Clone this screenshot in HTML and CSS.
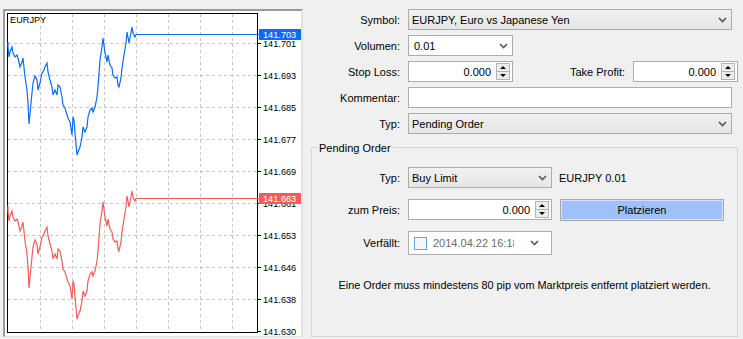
FILE: index.html
```html
<!DOCTYPE html>
<html>
<head>
<meta charset="utf-8">
<link rel="stylesheet" href="styles.css">
</head>
<body>
<div class="app">
  <div class="chart">
    <svg width="296" height="325" viewBox="5 11 296 325" xmlns="http://www.w3.org/2000/svg">
      <defs>
        <polyline id="curve" fill="none" points="8,42 8,47 9,57 10,52 12,47 13,53 15,57 17,55 18,58 20,67 22,62 23,58 25,77 27,90 28,103 29,124 31,103 32,93 33,83 35,76 37,80 38,90 40,83 42,73 43,72 45,67 47,63 48,72 50,80 52,87 53,95 55,90 57,95 58,85 60,87 62,97 63,105 65,108 67,115 68,118 70,122 72,135 73,117 74,120 75,133 77,155 78,152 80,147 82,137 83,127 85,132 87,127 88,117 90,110 92,108 93,112 95,107 97,97 98,87 100,60 102,47 103,38 105,53 107,62 108,55 110,65 112,68 113,75 115,78 117,77 118,85 119,87 121,78 122,68 124,55 126,43 127,32 128,37 129,43 131,33 132,27 133,33 135,37 136,34.5"/>
      </defs>
      <g class="grid">
        <path d="M40.5 14V332M72.5 14V332M104.5 14V332M136.5 14V332M168.5 14V332M200.5 14V332M232.5 14V332"/>
        <path d="M8 43.5H257M8 75.5H257M8 107.5H257M8 139.5H257M8 171.5H257M8 203.5H257M8 235.5H257M8 267.5H257M8 299.5H257"/>
      </g>
      <rect x="7.5" y="13.5" width="250" height="319" fill="none" stroke="#000"/>
      <path class="ticks" d="M258 43.5h3M258 75.5h3M258 107.5h3M258 139.5h3M258 171.5h3M258 203.5h3M258 235.5h3M258 267.5h3M258 299.5h3M258 331.5h3"/>
      <g class="axis">
        <text x="263" y="47">141.701</text>
        <text x="263" y="79">141.693</text>
        <text x="263" y="111">141.685</text>
        <text x="263" y="143">141.677</text>
        <text x="263" y="175">141.669</text>
        <text x="263" y="207">141.661</text>
        <text x="263" y="239">141.653</text>
        <text x="263" y="271">141.646</text>
        <text x="263" y="303">141.638</text>
        <text x="263" y="335">141.630</text>
      </g>
      <text class="sym" x="10" y="23">EURJPY</text>
      <use href="#curve" class="blue"/>
      <line x1="136" y1="34.5" x2="259" y2="34.5" class="blue"/>
      <rect x="259" y="29" width="42" height="11" class="bluebg"/>
      <text x="263" y="38" class="tag">141.703</text>
      <use href="#curve" class="red" transform="translate(0,164)"/>
      <line x1="136" y1="198.5" x2="259" y2="198.5" class="red"/>
      <rect x="259" y="193" width="42" height="11" class="redbg"/>
      <text x="263" y="202" class="tag">141.663</text>
    </svg>
  </div>
  <div class="panel">
    <div class="rows">
      <div class="row">
        <span class="lbl">Symbol:</span>
        <div class="ctl combo w-full"><span class="val">EURJPY, Euro vs Japanese Yen</span><svg class="chev" width="9" height="6" viewBox="0 0 9 6"><path d="M1 1l3.5 3.5L8 1"/></svg></div>
      </div>
      <div class="row">
        <span class="lbl">Volumen:</span>
        <div class="ctl edit w-sm"><span class="val pad5">0.01</span><svg class="chev" width="9" height="6" viewBox="0 0 9 6"><path d="M1 1l3.5 3.5L8 1"/></svg></div>
      </div>
      <div class="row">
        <span class="lbl">Stop Loss:</span>
        <div class="ctl edit num w-sm"><span class="val">0.000</span><span class="spin"><span class="up"></span><span class="dn"></span></span></div>
        <span class="lbl2">Take Profit:</span>
        <div class="ctl edit num w-sm"><span class="val">0.000</span><span class="spin"><span class="up"></span><span class="dn"></span></span></div>
      </div>
      <div class="row">
        <span class="lbl">Kommentar:</span>
        <div class="ctl edit w-full"></div>
      </div>
      <div class="row">
        <span class="lbl">Typ:</span>
        <div class="ctl combo w-full"><span class="val">Pending Order</span><svg class="chev" width="9" height="6" viewBox="0 0 9 6"><path d="M1 1l3.5 3.5L8 1"/></svg></div>
      </div>
    </div>
    <fieldset class="group">
      <legend>Pending Order</legend>
      <div class="grows">
        <div class="row">
          <span class="glbl">Typ:</span>
          <div class="ctl combo w-md"><span class="val">Buy Limit</span><svg class="chev" width="9" height="6" viewBox="0 0 9 6"><path d="M1 1l3.5 3.5L8 1"/></svg></div>
          <span class="info">EURJPY 0.01</span>
        </div>
        <div class="row">
          <span class="glbl">zum Preis:</span>
          <div class="ctl edit num w-md"><span class="val">0.000</span><span class="spin"><span class="up"></span><span class="dn"></span></span></div>
          <div class="btn">Platzieren</div>
        </div>
        <div class="row tall">
          <span class="glbl">Verfällt:</span>
          <div class="ctl edit date w-md"><span class="chk"></span><span class="dval">2014.04.22 16:18</span><svg class="chev" width="9" height="6" viewBox="0 0 9 6"><path d="M1 1l3.5 3.5L8 1"/></svg></div>
        </div>
      </div>
      <p class="msg">Eine Order muss mindestens 80 pip vom Marktpreis entfernt platziert werden.</p>
    </fieldset>
  </div>
</div>
</body>
</html>
```
FILE: styles.css
```css
html, body {
  margin: 0;
  background: #f0f0f0;
  font-family: "Liberation Sans", Arial, sans-serif;
  font-size: 11px;
  color: #000;
}

.app {
  display: flex;
  align-items: flex-start;
  padding: 9px 0 0 3px;
  height: 339px;
  box-sizing: border-box;
}

.chart {
  width: 300px;
  height: 328px;
  box-sizing: border-box;
  border-style: solid;
  border-width: 2px 2px 1px 2px;
  border-color: #9b9b9b #e3e3e3 #e3e3e3 #9b9b9b;
  background: #fff;
}

.chart svg {
  display: block;
}

.grid path {
  stroke: #c6c6c6;
  stroke-width: 1;
  stroke-dasharray: 3 3;
  fill: none;
}

.ticks {
  stroke: #000;
  stroke-width: 1;
}

.axis text, .tag, .sym {
  font-family: "Liberation Sans", Arial, sans-serif;
  font-size: 9.2px;
  fill: #000;
}

.tag {
  fill: #fff;
}

.blue {
  stroke: #0a6cf4;
  stroke-width: 1.2;
  fill: none;
}

.red {
  stroke: #f65b5b;
  stroke-width: 1.2;
  fill: none;
}

.bluebg {
  fill: #0a6cf4;
}

.redbg {
  fill: #f65b5b;
}

/* form panel */
.panel {
  margin-left: 8px;
  width: 427px;
  display: flex;
  flex-direction: column;
}

.rows {
  display: flex;
  flex-direction: column;
  gap: 5px;
}

.row {
  display: flex;
  align-items: center;
  height: 21px;
}

.row.tall {
  height: 24px;
}

.lbl {
  width: 89px;
  margin-right: 8px;
  text-align: right;
  white-space: nowrap;
}

.lbl2 {
  flex: 1;
  margin-right: 8px;
  text-align: right;
  white-space: nowrap;
}

.glbl {
  width: 88px;
  margin-right: 8px;
  text-align: right;
  white-space: nowrap;
}

.ctl {
  box-sizing: border-box;
  height: 21px;
  border: 1px solid #acacac;
  display: flex;
  align-items: center;
  padding: 0 3px;
  position: relative;
}

.combo {
  background: linear-gradient(#f1f1f1, #e6e6e6);
}

.edit {
  background: #fff;
}

.w-full { width: 324px; }
.w-sm { width: 105px; }
.w-md { width: 144px; }

.val {
  flex: 1;
  white-space: nowrap;
  overflow: hidden;
}

.pad5 {
  padding-left: 2px;
}

.num .val {
  text-align: right;
  padding-right: 5px;
}

.num {
  padding-right: 2px;
}

.chev {
  flex: none;
  margin-right: 1px;
}

.chev path {
  fill: none;
  stroke: #5a5a5a;
  stroke-width: 1.7;
}

.spin {
  flex: none;
  width: 14px;
  height: 17px;
  display: flex;
  flex-direction: column;
  box-sizing: border-box;
  border: 1px solid #b4b4b4;
  background: #ececec;
}

.spin .up, .spin .dn {
  flex: 1;
  display: flex;
  align-items: center;
  justify-content: center;
}

.spin .up {
  border-bottom: 1px solid #b4b4b4;
}

.spin .up::before {
  content: "";
  border-left: 3px solid transparent;
  border-right: 3px solid transparent;
  border-bottom: 3px solid #000;
}

.spin .dn::before {
  content: "";
  border-left: 3px solid transparent;
  border-right: 3px solid transparent;
  border-top: 3px solid #000;
}

.group {
  margin: 6px 0 0 0;
  padding: 0;
  border: 1px solid #d6d6d6;
  height: 197px;
  box-sizing: border-box;
  min-width: 0;
}

.group legend {
  margin-left: 5px;
  padding: 2px 2px 0;
  line-height: 13px;
}

.grows {
  display: flex;
  flex-direction: column;
  gap: 11px;
  padding-top: 12px;
}

.info {
  margin-left: 7px;
  white-space: nowrap;
}

.btn {
  margin-left: 8px;
  width: 164px;
  height: 22px;
  box-sizing: border-box;
  border: 1px solid #a8a8a8;
  box-shadow: inset 0 0 0 1px #cfe0fb;
  background: #9fc0f9;
  display: flex;
  align-items: center;
  justify-content: center;
}

.date {
  height: 24px;
  padding: 0 4px 0 5px;
}

.chk {
  flex: none;
  width: 11px;
  height: 11px;
  border: 1px solid #6aa0e4;
  background: #f4f8fe;
  margin-right: 6px;
}

.dval {
  width: 81px;
  color: #6d6d6d;
  white-space: nowrap;
  overflow: hidden;
  flex: none;
}

.date .chev {
  margin-left: auto;
  margin-right: 8px;
}

.msg {
  margin: 24px 0 0 0;
  text-align: center;
  white-space: nowrap;
  font-size: 10.85px;
}
```
